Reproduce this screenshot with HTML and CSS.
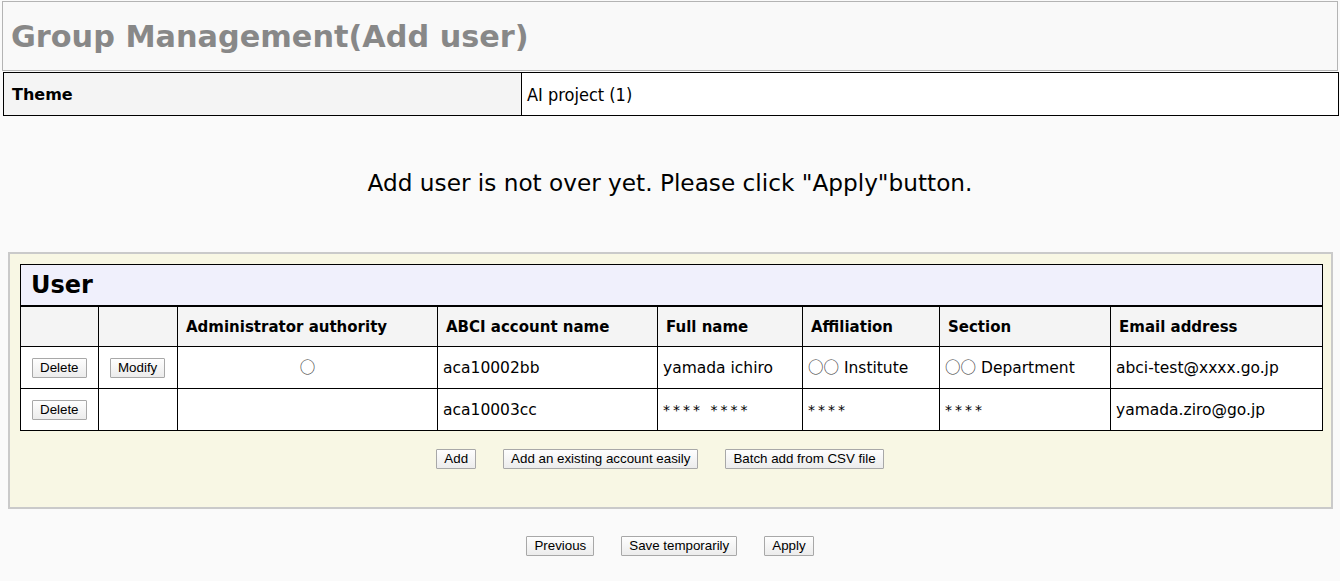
FILE: index.html
```html
<!DOCTYPE html>
<html>
<head>
<meta charset="utf-8">
<link rel="stylesheet" href="styles.css">
</head>
<body>
<div class="title-box"><h1 class="title">Group Management(Add user)</h1></div>
<table class="theme">
  <tr><th class="theme-h">Theme</th><td class="theme-v">AI project (1)</td></tr>
</table>
<p class="message">Add user is not over yet. Please click "Apply"button.</p>
<div class="panel">
  <table class="users">
    <colgroup>
      <col class="c1"><col class="c2"><col class="c3"><col class="c4">
      <col class="c5"><col class="c6"><col class="c7"><col class="c8">
    </colgroup>
    <tr><td class="caption" colspan="8">User</td></tr>
    <tr class="head">
      <th></th><th></th>
      <th>Administrator authority</th>
      <th>ABCI account name</th>
      <th>Full name</th>
      <th>Affiliation</th>
      <th>Section</th>
      <th>Email address</th>
    </tr>
    <tr>
      <td class="btn-cell"><button class="btn">Delete</button></td>
      <td class="btn-cell"><button class="btn">Modify</button></td>
      <td class="center"><span class="maru">○</span></td>
      <td>aca10002bb</td>
      <td>yamada ichiro</td>
      <td><span class="maru">○○</span> Institute</td>
      <td><span class="maru">○○</span> Department</td>
      <td>abci-test@xxxx.go.jp</td>
    </tr>
    <tr>
      <td class="btn-cell"><button class="btn">Delete</button></td>
      <td class="btn-cell"></td>
      <td></td>
      <td>aca10003cc</td>
      <td class="stars">**** ****</td>
      <td class="stars">****</td>
      <td class="stars">****</td>
      <td>yamada.ziro@go.jp</td>
    </tr>
  </table>
  <div class="actions">
    <button class="btn">Add</button>
    <button class="btn">Add an existing account easily</button>
    <button class="btn">Batch add from CSV file</button>
  </div>
</div>
<div class="footer">
  <button class="btn">Previous</button>
  <button class="btn">Save temporarily</button>
  <button class="btn">Apply</button>
</div>
</body>
</html>
```
FILE: styles.css
```css
html, body {
  margin: 0;
  padding: 0;
  background: #fafafa;
  font-family: "DejaVu Sans", Verdana, sans-serif;
  color: #000;
}
.title-box {
  margin: 1px 2px 0 2px;
  height: 68px;
  border: 1px solid #b4b4b4;
  background: #f9f9f9;
  display: flex;
  align-items: center;
}
.title {
  margin: 0 0 0 8px;
  font-size: 30.3px;
  font-weight: bold;
  color: #888;
}
.theme {
  margin: 1px 1px 0 3px;
  width: 1336px;
  border-collapse: collapse;
  border: 1px solid #000;
}
.theme th, .theme td {
  border: 1px solid #000;
  height: 42px;
  padding: 0 0 0 5px;
  text-align: left;
}
.theme-h {
  width: 509px;
  background: #f4f4f4;
  font-size: 16px;
  font-weight: bold;
  vertical-align: middle;
}
.theme .theme-h { padding-left: 8px; }
.theme-v {
  background: #fff;
  font-family: "DejaVu Sans Condensed", "DejaVu Sans", sans-serif;
  font-size: 18px;
  padding-top: 2px;
}
.message {
  margin: 53px 0 0 0;
  height: 83px;
  text-align: center;
  font-size: 23.2px;
}
.panel {
  margin: 0 7px 0 8px;
  border: 2px solid #cacaca;
  background: #f8f7e4;
  padding: 10px 10px 0 10px;
  height: 243px;
}
.users {
  width: 1302px;
  table-layout: fixed;
  border-collapse: collapse;
  background: #fff;
  font-size: 15.5px;
}
.users td, .users th {
  border: 1px solid #000;
  height: 41px;
  padding: 0 5px;
  text-align: left;
  white-space: nowrap;
}
.users .caption {
  background: #f0f0fc;
  font-size: 24px;
  font-weight: bold;
  padding-left: 10px;
  border-bottom: 2px solid #000;
  height: 40px;
}
.users .head th {
  background: #f4f4f4;
  padding: 0 8px;
  height: 39px;
  font-size: 15px;
}
.c1 { width: 78px; }
.c2 { width: 79px; }
.c3 { width: 260px; }
.c4 { width: 220px; }
.c5 { width: 145px; }
.c6 { width: 137px; }
.c7 { width: 171px; }
.c8 { width: 212px; }
.users td.center { text-align: center; }
.users td.btn-cell { padding: 0 0 0 11px; }
.users td.stars { font-size: 14px; letter-spacing: 3px; }
.maru {
  font-family: "Noto Sans CJK JP", "DejaVu Sans", sans-serif;
  font-size: 15.5px;
  color: #333;
  line-height: 1;
}
.btn {
  font-family: "Liberation Sans", Arial, sans-serif;
  font-size: 13.333px;
  padding: 0 7px;
  height: 20px;
  line-height: 18px;
  border: 1px solid #a8a8a8;
  border-radius: 1px;
  background: linear-gradient(#fefefe, #ececec);
  color: #000;
}
.actions {
  display: flex;
  justify-content: center;
  gap: 27px;
  margin-top: 18px;
  padding-right: 21px;
}
.footer {
  display: flex;
  justify-content: center;
  gap: 27px;
  margin-top: 27px;
}
```
